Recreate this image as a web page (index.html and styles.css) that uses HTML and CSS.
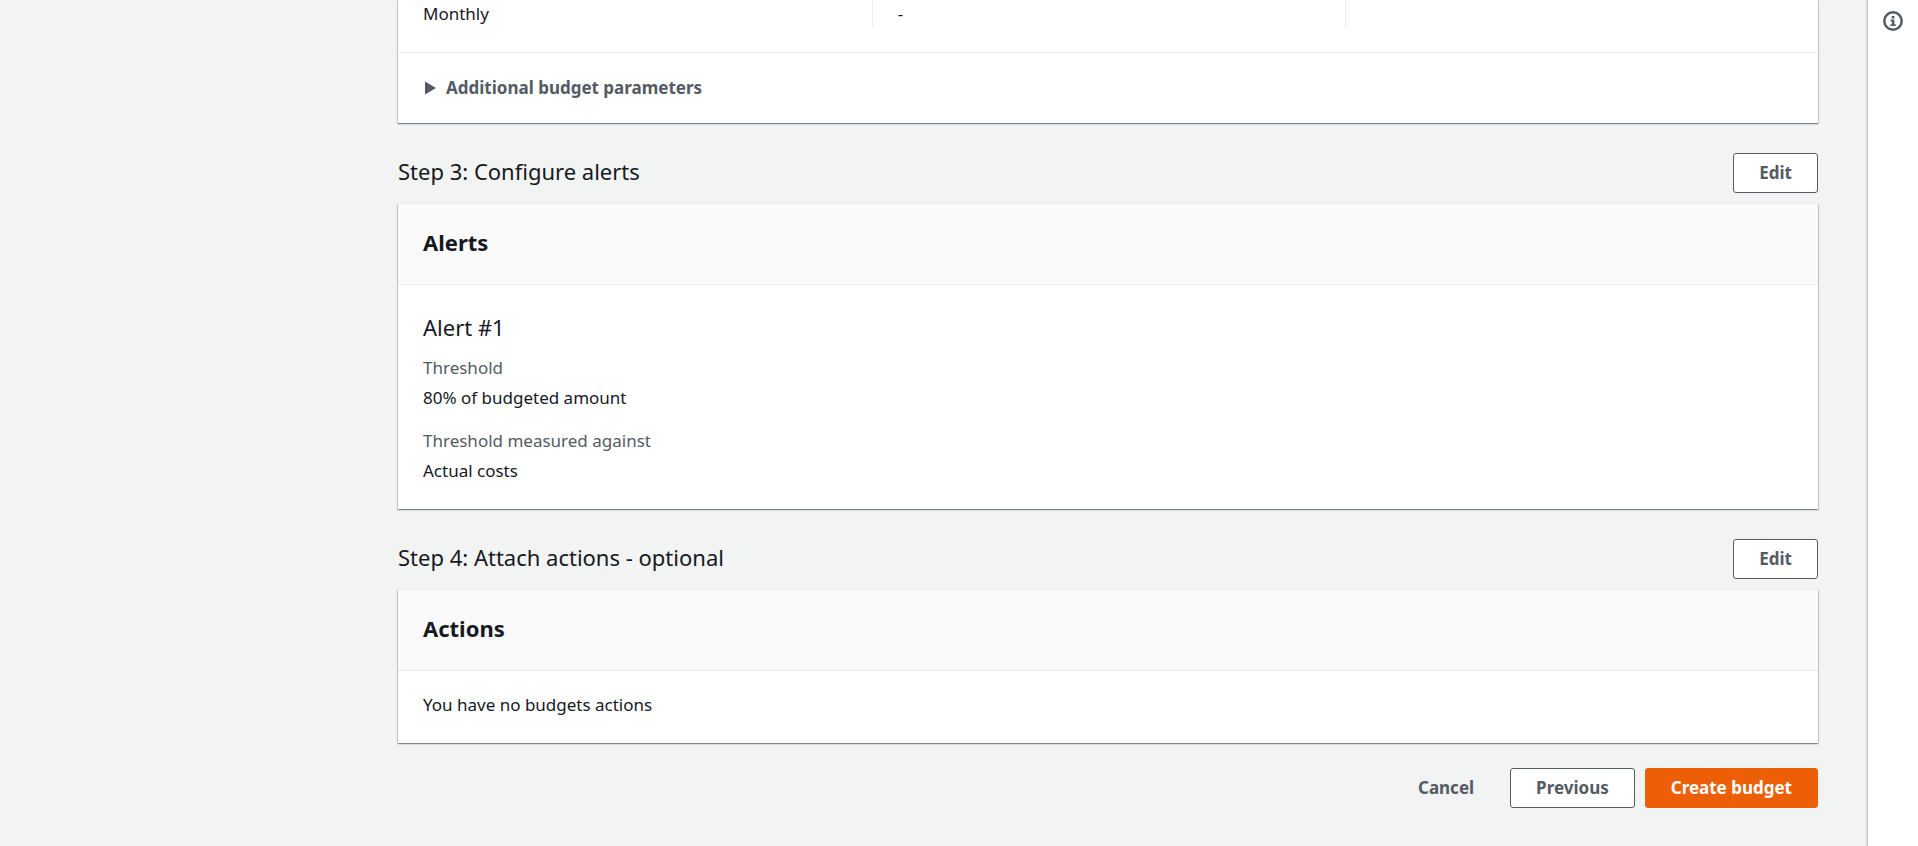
FILE: index.html
```html
<!DOCTYPE html>
<html lang="en">
<head>
<meta charset="utf-8">
<title>Create budget - Review</title>
<link rel="stylesheet" href="styles.css">
</head>
<body>
<div class="layout">
  <main class="content">
    <section class="card card-continued" aria-label="Budget details">
      <div class="columns">
        <div class="column">Monthly</div>
        <div class="column">-</div>
        <div class="column"></div>
      </div>
      <button class="expander" type="button" aria-expanded="false">
        <svg class="caret" viewBox="0 0 12 14" aria-hidden="true"><path d="M1 0.5 L12 7 L1 13.5 Z"/></svg>
        <span>Additional budget parameters</span>
      </button>
    </section>

    <div class="step-header">
      <h2 class="step-title">Step 3: Configure alerts</h2>
      <button class="button" type="button">Edit</button>
    </div>
    <section class="card">
      <header class="card-header"><h3 class="card-title">Alerts</h3></header>
      <div class="card-body alert-body">
        <h4 class="alert-title">Alert #1</h4>
        <dl class="pairs">
          <div class="pair">
            <dt>Threshold</dt>
            <dd>80% of budgeted amount</dd>
          </div>
          <div class="pair">
            <dt>Threshold measured against</dt>
            <dd>Actual costs</dd>
          </div>
        </dl>
      </div>
    </section>

    <div class="step-header">
      <h2 class="step-title">Step 4: Attach actions - optional</h2>
      <button class="button" type="button">Edit</button>
    </div>
    <section class="card">
      <header class="card-header"><h3 class="card-title">Actions</h3></header>
      <div class="card-body">You have no budgets actions</div>
    </section>

    <div class="actions">
      <button class="button button-link" type="button">Cancel</button>
      <button class="button" type="button">Previous</button>
      <button class="button button-primary" type="button">Create budget</button>
    </div>
  </main>
  <aside class="tools">
    <button class="info" type="button" aria-label="Open help panel">
      <svg viewBox="0 0 20 20" aria-hidden="true">
        <circle cx="10" cy="10" r="8.7" fill="none" stroke="#545b64" stroke-width="2.5"/>
        <path fill="#545b64" d="M8.7 5h2.7v2.4H8.7zM7.6 8.6h3.8v4.6h1.3V15H7.4v-1.8h1.5v-2.8H7.6z"/>
      </svg>
    </button>
  </aside>
</div>
</body>
</html>
```
FILE: styles.css
```css
* { box-sizing: border-box; }

body {
  margin: 0;
  background: #f2f3f3;
  color: #16191f;
  font-family: "Noto Sans", "Open Sans", sans-serif;
  font-size: 17px;
  line-height: 28px;
}

h2, h3, h4, dl, dd { margin: 0; }

button {
  font: inherit;
  cursor: pointer;
}

.layout {
  display: flex;
  min-height: 100vh;
}

.content {
  flex: 1;
  padding: 0 49px 38px 398px;
}

.tools {
  width: 51px;
  padding-top: 11px;
  background: #fff;
  border-left: 1px solid #c3c8c8;
  box-shadow: -1px 0 1px rgba(0, 28, 36, 0.1);
  text-align: center;
}

.info {
  padding: 0;
  border: 0;
  background: none;
  line-height: 0;
}

.info svg {
  width: 20px;
  height: 20px;
}

.card {
  background: #fff;
  border-top: 1px solid #eaeded;
  box-shadow:
    0 1px 1px rgba(0, 28, 36, 0.3),
    1px 1px 1px rgba(0, 28, 36, 0.15),
    -1px 1px 1px rgba(0, 28, 36, 0.15);
}

.card-continued { border-top: 0; }

.columns {
  display: grid;
  grid-template-columns: repeat(3, 1fr);
  gap: 26px;
  padding: 0 25px 25px 0;
}

.column {
  height: 27px;
  padding-left: 25px;
}

.column + .column { border-left: 1px solid #eaeded; }

.expander {
  display: flex;
  align-items: center;
  gap: 10px;
  width: 100%;
  padding: 21px 26px;
  border: 0;
  border-top: 1px solid #eaeded;
  background: none;
  color: #545b64;
  font-weight: 700;
}

.caret {
  width: 12px;
  height: 14px;
  fill: #545b64;
}

.step-header {
  display: flex;
  align-items: center;
  justify-content: space-between;
  padding: 30px 0 10px;
}

.step-title, .alert-title {
  font-size: 22px;
  font-weight: 400;
  line-height: 28px;
}

.step-title { padding-bottom: 4px; }

.button {
  padding: 5px 25px;
  border: 1px solid #545b64;
  border-radius: 3px;
  background: #fff;
  color: #545b64;
  font-weight: 700;
}

.button-link {
  border-color: transparent;
  background: none;
}

.button-primary {
  border-color: #ec5f07;
  background: #ec5f07;
  color: #fff;
}

.card-header {
  padding: 24px 25px 28px;
  background: #fafafa;
  border-bottom: 1px solid #eaeded;
}

.card-title {
  font-size: 22px;
  line-height: 28px;
}

.card-body { padding: 20px 25px 24px; }

.alert-body { padding-top: 28px; }

.pairs {
  display: grid;
  gap: 15px;
  padding-top: 13px;
}

.pair {
  display: grid;
  gap: 2px;
}

.pair dt { color: #545b64; }

.actions {
  display: flex;
  justify-content: flex-end;
  gap: 10px;
  padding-top: 25px;
}
```
